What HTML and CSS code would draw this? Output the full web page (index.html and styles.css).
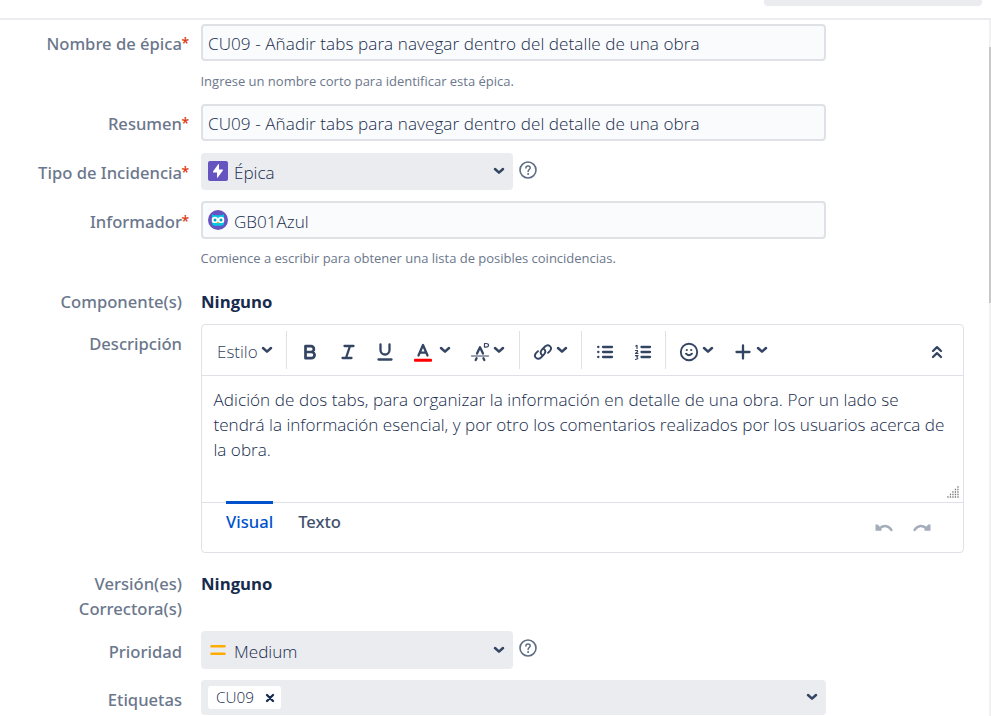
FILE: index.html
```html
<!DOCTYPE html>
<html lang="es">
<head>
<meta charset="utf-8">
<title>Editar incidencia</title>
<link rel="stylesheet" href="styles.css">
</head>
<body>
<svg width="0" height="0" class="defs">
  <symbol id="chev" viewBox="0 0 12 8"><path d="M2 2l4 3.700L10 2" fill="none" stroke="currentColor" stroke-width="2.500" stroke-linecap="round" stroke-linejoin="round"/></symbol>
  <symbol id="help" viewBox="0 0 18 18"><circle cx="9" cy="9" r="8" fill="none" stroke="currentColor" stroke-width="1.600"/><path d="M6.900 7c0-2.800 4.300-2.800 4.300-.1 0 1.600-2.100 1.700-2.100 3.500" fill="none" stroke="currentColor" stroke-width="1.500" stroke-linecap="round"/><circle cx="9.100" cy="13" r="1" fill="currentColor"/></symbol>
</svg>
<header class="top"><div class="top-button"></div></header>
<main class="page">
<form class="form">
  <div class="row r-name">
    <label class="label">Nombre de épica<i class="req">*</i></label>
    <div><div class="input main-text"><span class="title">CU09 - Añadir tabs para navegar dentro del detalle de una obra</span></div>
    <p class="hint">Ingrese un nombre corto para identificar esta épica.</p></div>
  </div>
  <div class="row r-summary">
    <label class="label">Resumen<i class="req">*</i></label>
    <div class="input main-text"><span class="title">CU09 - Añadir tabs para navegar dentro del detalle de una obra</span></div>
  </div>
  <div class="row r-type">
    <label class="label">Tipo de Incidencia<i class="req">*</i></label>
    <div class="with-help">
      <div class="select main-text">
        <svg class="icon20" viewBox="0 0 20 20"><rect width="20" height="20" rx="2" fill="#6554c0"/><path d="M10.200 3.200L5 10.500q-.4.900.6.900H9V16.500q.2.700.8 0L15 9.300q.4-.9-.6-.9H11V3.500q-.2-.8-.8-.3z" fill="#fff"/></svg>
        <span class="epic">Épica</span><svg class="chev"><use href="#chev"/></svg>
      </div><svg class="help"><use href="#help"/></svg>
    </div>
  </div>
  <div class="row r-reporter">
    <label class="label low">Informador<i class="req">*</i></label>
    <div><div class="input tall main-text">
      <svg class="icon20 avatar" viewBox="0 0 20 20"><circle cx="10" cy="10" r="10" fill="#6554c0"/><path d="M4 4.200l2.500 1h7l2.500-1V13q0 2.800-2.800 2.800H6.800Q4 15.800 4 13z" fill="#00c7e6"/><circle cx="6.900" cy="9.900" r="3.200" fill="#fff"/><circle cx="13.100" cy="9.900" r="3.200" fill="#fff"/><circle cx="7" cy="9.900" r="1.500" fill="#00a3bf"/><circle cx="13" cy="9.900" r="1.500" fill="#00a3bf"/><path d="M8.800 12h2.400L10 14z" fill="#ffab00"/></svg>
      <span class="reporter">GB01Azul</span></div>
    <p class="hint hint2">Comience a escribir para obtener una lista de posibles coincidencias.</p></div>
  </div>
  <div class="row r-comp"><label class="label flat">Componente(s)</label><strong class="none">Ninguno</strong></div>
  <div class="row r-desc">
    <label class="label">Descripción</label>
    <section class="editor">
      <div class="toolbar">
        <div class="group g1"><span class="style">Estilo</span><svg class="chev"><use href="#chev"/></svg></div>
        <div class="group g2">
          <svg class="tool" viewBox="0 0 20 20"><path d="M5.500 4.200h5.500a2.900 2.900 0 0 1 0 5.800H5.500zM5.500 10h6a3.100 3.100 0 0 1 0 6.200H5.500z" class="s heavy"/></svg>
          <svg class="tool" viewBox="0 0 20 20"><path d="M6.500 4h9M4.500 16h9M12 4L8 16" class="s"/></svg>
          <svg class="tool" viewBox="0 0 20 20"><path d="M5.500 2.500v5.500a4.500 4.500 0 0 0 9 0v-5.500M3.500 17.500h13" class="s"/></svg>
          <div class="pair"><svg class="tool" viewBox="0 0 20 20"><path d="M5.500 13.500L10 3l4.500 10.500M6.800 10.600h6.400" class="s"/><rect x="1" y="16.700" width="18" height="3" rx="1" fill="red"/></svg><svg class="chev"><use href="#chev"/></svg></div>
          <div class="pair p2"><svg class="tool" viewBox="0 0 20 20"><path d="M7 11.500L10 5.300 13 11.500M5.700 18l.9-1.800M14.300 18l-.9-1.800" class="s"/><path d="M1.500 14h17" class="s fine"/><path d="M14.500 1.500h1.500q2.500 0 2.500 1.800t-2.500 1.800h-1.500z" class="s fine"/></svg><svg class="chev"><use href="#chev"/></svg></div>
        </div>
        <div class="group g3"><svg class="tool" viewBox="0 0 20 20"><path d="M9.200 13.200a3.700 3.700 0 0 1-.7-5L12 4.500c3.500-3.300 8 .8 5 4.300l-2 2M10.800 6.800a3.700 3.700 0 0 1 .7 5L8 15.500c-3.500 3.300-8-.8-5-4.300l2-2" class="s thin"/></svg><svg class="chev"><use href="#chev"/></svg></div>
        <div class="group g4">
          <svg class="tool" viewBox="0 0 20 20"><path d="M8 5h9M8 10h9M8 15h9M3.200 5h.2M3.200 10h.2M3.200 15h.2" class="s"/></svg>
          <svg class="tool" viewBox="0 0 20 20"><path d="M8.500 5H17M8.500 10H17M8.500 15H17" class="s"/><path d="M2.800 4l1.200-.6V6.500M2.500 8.500h2v1.200L2.500 11.500H5M2.500 13.700H5L3.800 15q2.500 1.800-1.300 2.500" class="s fine"/></svg>
        </div>
        <div class="group g5">
          <svg class="tool" viewBox="0 0 20 20"><circle cx="10" cy="10" r="8.200" class="s thin"/><circle cx="7.800" cy="8" r="1.100" fill="currentColor"/><circle cx="12.200" cy="8" r="1.100" fill="currentColor"/><path d="M7 11.700q3 3 6 0" class="s thin"/></svg><svg class="chev up"><use href="#chev"/></svg>
          <svg class="tool plus" viewBox="0 0 20 20"><path d="M3.500 10h13M10 3.500v13" class="s"/></svg><svg class="chev up"><use href="#chev"/></svg>
        </div>
        <svg class="collapse" viewBox="0 0 12 14"><path d="M2 6l4-3.800L10 6M2 12l4-3.800L10 12" class="s"/></svg>
      </div>
      <div class="content main-text">
        <div class="d1">Adición de dos tabs, para organizar la información en detalle de una obra. Por un lado se</div>
        <div class="d2">tendrá la información esencial, y por otro los comentarios realizados por los usuarios acerca de</div>
        <div class="d3">la obra.</div>
        <svg class="grip" viewBox="0 0 12 12" fill="none" stroke="#777" stroke-width="1.300" stroke-dasharray="1.300 1.200"><path d="M10.300 1H12M7.800 3.500H12M5.300 6H12M2.800 8.500H12M.3 11H12"/></svg>
      </div>
      <div class="tabs">
        <span class="tab active">Visual</span><span class="tab">Texto</span>
        <div class="history">
          <svg viewBox="0 0 20 10"><path d="M4.500 6Q12-.5 17.500 7" class="s"/><path d="M1.500 1.500h2.200L7.500 5.500v2.300h-6z" fill="currentColor"/></svg>
          <svg viewBox="0 0 20 10"><path d="M15.500 6Q8-.5 2.500 7" class="s"/><path d="M18.500 1.500h-2.200L12.500 5.500v2.300h6z" fill="currentColor"/></svg>
        </div>
      </div>
    </section>
  </div>
  <div class="row r-version"><label class="label flat">Versión(es)<br>Correctora(s)</label><strong class="none">Ninguno</strong></div>
  <div class="row r-priority">
    <label class="label low">Prioridad</label>
    <div class="with-help"><div class="select tall main-text">
      <svg class="icon20" viewBox="0 0 20 20"><path d="M3.500 6.200h13M3.500 13.700h13" stroke="#ffab00" stroke-width="2.500" stroke-linecap="round"/></svg>
      <span class="medium">Medium</span><svg class="chev"><use href="#chev"/></svg></div><svg class="help"><use href="#help"/></svg></div>
  </div>
  <div class="row r-tags">
    <label class="label">Etiquetas</label>
    <div class="tags"><span class="tag">CU09<svg viewBox="0 0 10 10"><path d="M2 2l6 6M8 2L2 8" class="s"/></svg></span><svg class="chev"><use href="#chev"/></svg></div>
  </div>
</form>
<aside class="scroll"><div class="thumb"></div></aside>
</main>
</body>
</html>
```
FILE: styles.css
```css
* { box-sizing: border-box; }
body { margin: 0; width: 991px; height: 716px; overflow: hidden; background: #fff; color: #172b4d; font: 16.5px/25px "Open Sans", "Noto Sans", sans-serif; }
.defs { position: absolute; }
svg { display: block; flex: none; }
.s { fill: none; stroke: currentColor; stroke-width: 2.3; stroke-linecap: round; stroke-linejoin: round; }
.s.heavy { stroke-width: 2.7; }
.s.thin { stroke-width: 1.9; }
.s.fine { stroke-width: 1.2; }
.top { height: 20px; border-bottom: 2px solid #ebecf0; padding-right: 9px; }
.top-button { width: 218px; height: 6px; margin-left: auto; background: #ebecf0; border-radius: 0 0 4px 4px; }
.page { display: flex; height: 696px; }
.form { width: 989px; padding-top: 4px; }
.scroll { width: 2px; background: #f1f1f1; padding-top: 27px; }
.thumb { height: 256px; background: #c8c8c8; }
.row { display: grid; grid-template-columns: 182px 763px; column-gap: 19px; align-items: start; }
.r-name { height: 80px; }
.r-summary { height: 49px; }
.r-type { height: 48px; }
.r-reporter { height: 88px; }
.r-comp { height: 35px; }
.r-desc { height: 247px; }
.r-version { height: 60px; }
.r-priority { height: 49px; }
.r-tags { height: 36px; }
.label { position: relative; padding-top: 7px; text-align: right; color: #6b778c; font-family: "Noto Sans", "Open Sans", sans-serif; font-size: 16.6px; font-weight: 500; }
.label.low { padding-top: 8px; }
.label.flat { padding-top: 0; }
.req { position: absolute; left: 100%; color: #de350b; font-style: normal; font-size: 14px; margin: -1px 0 0 -0.5px; }
.main-text { font-size: 17.1px; font-weight: 300; }
.title { letter-spacing: 0.07px; }
.d1 { letter-spacing: 0.05px; }
.input { display: flex; align-items: center; width: 625px; height: 37px; padding: 1px 5px 0; background: #fafbfc; border: 2px solid #dfe1e6; border-radius: 4px; }
.tall { height: 38px !important; }
.input.tall, .select.tall { padding-top: 2px; }
.hint { margin: 8px 0 0 -0.5px; font-size: 13px; letter-spacing: -0.01px; color: #6b778c; }
.hint2 { margin-top: 7px; }
.with-help { display: flex; gap: 6px; }
.select { display: flex; align-items: center; width: 312px; height: 37px; padding: 1px 7px 0; background: #ebecf0; border-radius: 4px; }
.icon20 { width: 20px; height: 20px; margin: -3px 6px 0 0; }
.chev { width: 12px; height: 8px; color: #344563; }
.select .chev, .tags .chev { margin: -2px 1px 0 auto; }
.help { width: 18px; height: 18px; margin-top: 8px; color: #5e6c84; }
.none { font-weight: 700; font-size: 16.7px; }
.editor { height: 229px; border: 1px solid #dfe1e6; border-radius: 4px; }
.toolbar { display: flex; align-items: center; height: 51px; border-bottom: 1px solid #dfe1e6; color: #344563; }
.group { display: flex; align-items: center; height: 38px; border-right: 1px solid #dfe1e6; }
.g1 { width: 85px; padding-left: 15px; gap: 3px; }
.style { font-size: 17px; font-weight: 300; padding-top: 3px; }
.tool { width: 20px; height: 20px; margin-top: 3px; }
.group .chev { margin-top: -1px; }
.g2 { width: 233px; padding-left: 13px; gap: 17.5px; }
.pair { display: flex; align-items: center; gap: 6px; }
.p2 { gap: 3px; margin-left: 2px; }
.g3 { width: 62px; padding-left: 13px; gap: 3px; }
.g4 { width: 84px; padding-left: 13px; gap: 18px; }
.g5 { border: 0; padding-left: 13px; gap: 3px; }
.plus { margin-left: 16px; }
.collapse { width: 12px; height: 14px; margin: 3px 20px 0 auto; }
.content { position: relative; height: 127px; padding: 11px 11.5px; border-bottom: 1px solid #dfe1e6; white-space: nowrap; }
.grip { position: absolute; right: 4px; bottom: 4px; width: 12px; height: 12px; }
.tabs { display: flex; gap: 25px; padding-left: 24px; color: #42526e; font-family: "Noto Sans", "Open Sans", sans-serif; font-size: 16.6px; font-weight: 500; }
.tab { border-top: 3px solid transparent; margin-top: -2px; padding-top: 5px; }
.active { position: relative; border-color: #0052cc; color: #0052cc; }
.history { display: flex; gap: 18px; margin: 20px 31px 0 auto; color: #a5adba; }
.history svg { width: 20px; height: 10px; }
.tags { display: flex; align-items: center; width: 625px; height: 35px; padding: 0 7px; background: #ebecf0; border-radius: 4px; }
.tag { display: flex; align-items: center; gap: 11px; height: 23px; width: 73px; padding-left: 8px; background: #fff; border-radius: 3px; font-size: 15.3px; font-weight: 300; }
.tag svg { width: 10px; height: 10px; }
```
